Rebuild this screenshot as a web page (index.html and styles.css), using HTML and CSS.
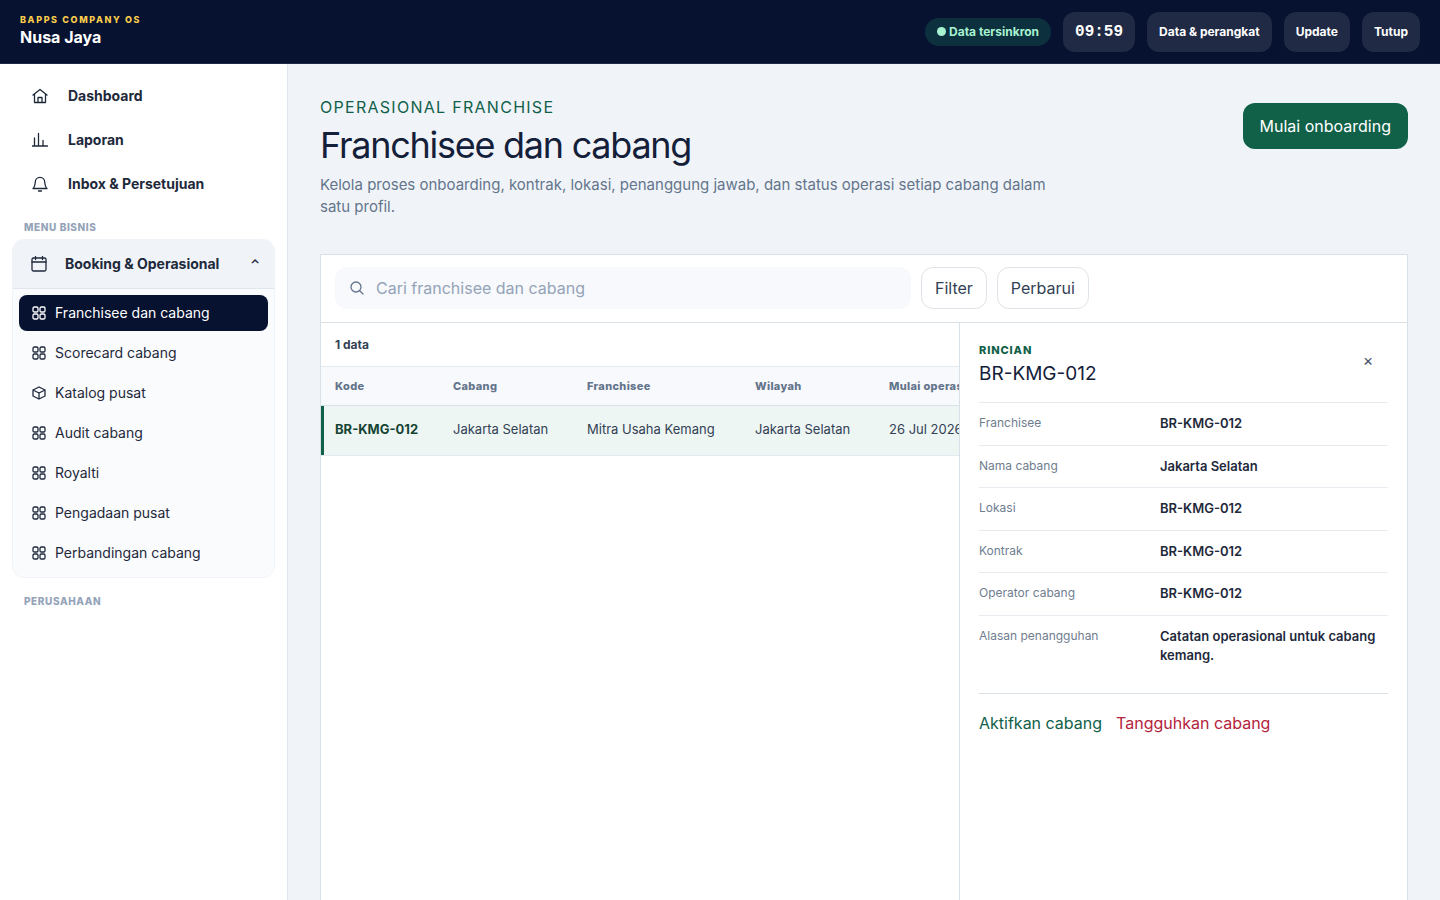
FILE: index.html
```
<!DOCTYPE html>
<html lang="id">
<head>
  <meta charset="utf-8">
  <meta name="viewport" content="width=device-width, initial-scale=1">
  <title>Franchisee dan cabang</title>
  <link rel="stylesheet" href="styles.css">
</head>
<body>
  <svg width="0" height="0" class="sprite" aria-hidden="true">
    <symbol id="icon-grid" viewBox="0 0 16 16">
      <rect x="2" y="2" width="5" height="5" rx="1.300"/>
      <rect x="9" y="2" width="5" height="5" rx="1.300"/>
      <rect x="2" y="9" width="5" height="5" rx="1.300"/>
      <rect x="9" y="9" width="5" height="5" rx="1.300"/>
    </symbol>
    <symbol id="icon-box" viewBox="0 0 16 16">
      <path d="M8 2l6 3v6l-6 3-6-3V5zM2 5l6 3 6-3M8 8v6"/>
    </symbol>
  </svg>

  <header class="topbar">
    <div class="brand">
      <span class="brand-eyebrow">BAPPS COMPANY OS</span>
      <strong class="brand-name">Nusa Jaya</strong>
    </div>
    <div class="topbar-actions">
      <span class="sync"><i class="sync-dot"></i>Data tersinkron</span>
      <time class="clock">09:59</time>
      <button type="button" class="top-btn">Data &amp; perangkat</button>
      <button type="button" class="top-btn">Update</button>
      <button type="button" class="top-btn">Tutup</button>
    </div>
  </header>

  <div class="layout">
    <nav class="sidebar">
      <a href="#" class="nav-link">
        <svg class="icon" viewBox="0 0 16 16"><path d="M1 7l7-5.500L15 7M2.500 6v8.500h11V6M6 14.500V9.500h4v5"/></svg>
        Dashboard
      </a>
      <a href="#" class="nav-link">
        <svg class="icon" viewBox="0 0 16 16"><path d="M.5 14h15M2.500 14V6M6.500 14V1.500M11 14V8.500"/></svg>
        Laporan
      </a>
      <a href="#" class="nav-link">
        <svg class="icon" viewBox="0 0 16 16"><path d="M1 12.500c1.800-1.500 2-3.200 2.300-6.500a4.700 4.700 0 0 1 9.400 0c.3 3.300 .5 5 2.300 6.500zM6.500 15h3"/></svg>
        Inbox &amp; Persetujuan
      </a>

      <p class="nav-label">MENU BISNIS</p>
      <div class="nav-group">
        <button type="button" class="nav-group-head" aria-expanded="true">
          <svg class="icon" viewBox="0 0 16 16"><rect x="1" y="2" width="14" height="13" rx="1.500"/><path d="M1 6h14M4.500 .5v3M11.500 .5v3"/></svg>
          <span>Booking &amp; Operasional</span>
          <span class="caret">⌃</span>
        </button>
        <div class="nav-sub">
          <a href="#" class="sub-link active"><svg class="icon"><use href="#icon-grid"/></svg>Franchisee dan cabang</a>
          <a href="#" class="sub-link"><svg class="icon"><use href="#icon-grid"/></svg>Scorecard cabang</a>
          <a href="#" class="sub-link"><svg class="icon"><use href="#icon-box"/></svg>Katalog pusat</a>
          <a href="#" class="sub-link"><svg class="icon"><use href="#icon-grid"/></svg>Audit cabang</a>
          <a href="#" class="sub-link"><svg class="icon"><use href="#icon-grid"/></svg>Royalti</a>
          <a href="#" class="sub-link"><svg class="icon"><use href="#icon-grid"/></svg>Pengadaan pusat</a>
          <a href="#" class="sub-link"><svg class="icon"><use href="#icon-grid"/></svg>Perbandingan cabang</a>
        </div>
      </div>
      <p class="nav-label">PERUSAHAAN</p>
    </nav>

    <main class="content">
      <div class="page-head">
        <div class="page-intro">
          <p class="eyebrow">OPERASIONAL FRANCHISE</p>
          <h1>Franchisee dan cabang</h1>
          <p class="lead">Kelola proses onboarding, kontrak, lokasi, penanggung jawab, dan status operasi setiap cabang dalam satu profil.</p>
        </div>
        <button type="button" class="primary">Mulai onboarding</button>
      </div>

      <section class="workspace">
        <div class="toolbar">
          <label class="search">
            <svg class="icon" viewBox="0 0 16 16"><circle cx="7" cy="7" r="5"/><path d="M10.700 10.700l3.300 3.300"/></svg>
            <input type="search" placeholder="Cari franchisee dan cabang" aria-label="Cari franchisee dan cabang">
          </label>
          <button type="button" class="tool-btn">Filter</button>
          <button type="button" class="tool-btn">Perbarui</button>
        </div>

        <div class="split">
          <div class="list">
            <p class="count">1 data</p>
            <table>
              <colgroup>
                <col class="col-code"><col class="col-branch"><col class="col-owner"><col class="col-area"><col class="col-date">
              </colgroup>
              <thead>
                <tr><th>Kode</th><th>Cabang</th><th>Franchisee</th><th>Wilayah</th><th>Mulai operasi</th></tr>
              </thead>
              <tbody>
                <tr class="selected">
                  <td><strong>BR-KMG-012</strong></td>
                  <td>Jakarta Selatan</td>
                  <td>Mitra Usaha Kemang</td>
                  <td>Jakarta Selatan</td>
                  <td>26 Jul 2026</td>
                </tr>
              </tbody>
            </table>
          </div>

          <aside class="detail">
            <div class="detail-head">
              <div>
                <p class="detail-label">RINCIAN</p>
                <h2>BR-KMG-012</h2>
              </div>
              <button type="button" class="close" aria-label="Tutup rincian">×</button>
            </div>
            <dl>
              <div><dt>Franchisee</dt><dd>BR-KMG-012</dd></div>
              <div><dt>Nama cabang</dt><dd>Jakarta Selatan</dd></div>
              <div><dt>Lokasi</dt><dd>BR-KMG-012</dd></div>
              <div><dt>Kontrak</dt><dd>BR-KMG-012</dd></div>
              <div><dt>Operator cabang</dt><dd>BR-KMG-012</dd></div>
              <div><dt>Alasan penangguhan</dt><dd>Catatan operasional untuk cabang kemang.</dd></div>
            </dl>
            <div class="detail-actions">
              <button type="button">Aktifkan cabang</button>
              <button type="button" class="danger">Tangguhkan cabang</button>
            </div>
          </aside>
        </div>
      </section>
    </main>
  </div>
</body>
</html>
```
FILE: styles.css
```
* {
  box-sizing: border-box;
}

body {
  display: flex;
  flex-direction: column;
  height: 100vh;
  margin: 0;
  overflow: hidden;
  background: #f0f4f9;
  color: #1e293b;
  font: 16px/1.5 Inter, sans-serif;
}

h1, h2, p, dl, dd {
  margin: 0;
}

button, input {
  font: inherit;
}

button {
  border: 0;
  cursor: pointer;
}

a {
  color: inherit;
  text-decoration: none;
}

.sprite {
  position: absolute;
}

.icon {
  flex: none;
  width: 16px;
  height: 16px;
  fill: none;
  stroke: currentColor;
  stroke-width: 1.3;
  stroke-linecap: round;
  stroke-linejoin: round;
}

/* top bar */

.topbar {
  display: flex;
  flex: none;
  align-items: center;
  justify-content: space-between;
  height: 64px;
  padding: 0 20px;
  border-bottom: 1px solid #1e2945;
  background: #06122f;
  color: #fff;
}

.brand {
  display: flex;
  flex-direction: column;
  padding-bottom: 4px;
}

.brand-eyebrow {
  color: #facc4d;
  font-size: 9px;
  font-weight: 800;
  line-height: 14px;
  letter-spacing: 0.18em;
}

.brand-name {
  font-size: 16px;
  line-height: 20px;
}

.topbar-actions {
  display: flex;
  align-items: center;
  gap: 12px;
  font-size: 12px;
  font-weight: 700;
}

.sync {
  display: flex;
  align-items: center;
  gap: 3px;
  height: 28px;
  padding: 0 12px;
  border-radius: 14px;
  background: #0d303f;
  color: #a7f3d0;
}

.sync-dot {
  width: 9px;
  height: 9px;
  border-radius: 50%;
  background: currentColor;
}

.clock,
.top-btn {
  height: 40px;
  padding: 0 12px;
  border-radius: 12px;
  background: #202a45;
  color: #fff;
}

.clock {
  font: 700 16px/40px "Liberation Mono", monospace;
}

/* sidebar */

.layout {
  display: flex;
  flex: 1;
  min-height: 0;
}

.sidebar {
  flex: none;
  width: 288px;
  padding: 12px;
  border-right: 1px solid #dfe6ee;
  background: #fff;
  line-height: 20px;
}

.nav-link {
  display: flex;
  align-items: center;
  gap: 20px;
  height: 40px;
  margin-bottom: 4px;
  padding: 0 20px;
  font-size: 14px;
  font-weight: 700;
}

.nav-label {
  padding: 12px 12px 4px;
  color: #94a3b8;
  font-size: 10px;
  font-weight: 800;
  line-height: 15px;
  letter-spacing: 0.06em;
}

.nav-group {
  margin-bottom: 4px;
  overflow: hidden;
  border: 1px solid #f0f4f8;
  border-radius: 12px;
  background: #fafbfd;
}

.nav-group-head {
  display: flex;
  align-items: center;
  gap: 18px;
  width: 100%;
  height: 49px;
  padding: 0 14px 0 18px;
  border-bottom: 1px solid #dfe6ee;
  background: #f0f4f9;
  color: inherit;
  font-size: 14px;
  font-weight: 700;
}

.caret {
  margin-left: auto;
  font-size: 12px;
}

.nav-sub {
  display: grid;
  gap: 4px;
  padding: 6px;
}

.sub-link {
  display: flex;
  align-items: center;
  gap: 8px;
  height: 36px;
  padding: 0 12px;
  border-radius: 8px;
  font-size: 14px;
}

.sub-link.active {
  background: #06122f;
  color: #fff;
}

/* page heading */

.content {
  display: flex;
  flex: 1;
  flex-direction: column;
  min-width: 0;
  padding: 32px 32px 0;
}

.page-head {
  display: flex;
  align-items: flex-start;
  justify-content: space-between;
  margin-bottom: 36px;
}

.page-intro {
  max-width: 740px;
}

.eyebrow {
  color: #116149;
  line-height: 22px;
  letter-spacing: 0.08em;
}

h1 {
  margin: 4px 0 6px;
  color: #14203a;
  font-size: 36px;
  font-weight: 400;
  line-height: 46px;
  letter-spacing: -0.035em;
}

.lead {
  color: #64748b;
  font-size: 15px;
  line-height: 22px;
}

.primary {
  height: 46px;
  margin-top: 7px;
  padding: 0 17px;
  border-radius: 12px;
  background: #116149;
  color: #fff;
}

/* workspace */

.workspace {
  display: flex;
  flex: 1;
  flex-direction: column;
  border: 1px solid #d9e1e8;
  border-bottom: 0;
  background: #fff;
}

.toolbar {
  display: flex;
  align-items: center;
  gap: 10px;
  padding: 12px 14px 13px;
  border-bottom: 1px solid #d9e1e8;
}

.search {
  display: flex;
  flex: 0 1 576px;
  align-items: center;
  gap: 11px;
  height: 42px;
  padding: 0 14px;
  border-radius: 12px;
  background: #f7f9fc;
  color: #64748b;
}

.search input {
  flex: 1;
  min-width: 0;
  padding: 0;
  border: 0;
  outline: 0;
  background: none;
}

.search input::placeholder {
  color: #94a3b8;
}

.tool-btn {
  height: 42px;
  padding: 0 13px;
  border: 1px solid #dfe4ea;
  border-radius: 12px;
  background: #fff;
  color: #334155;
}

.split {
  display: grid;
  flex: 1;
  grid-template-columns: minmax(0, 1fr) 448px;
}

.list {
  overflow: hidden;
}

.count {
  padding: 0 14px;
  border-bottom: 1px solid #e3e9ee;
  color: #334155;
  font-size: 12px;
  font-weight: 700;
  line-height: 43px;
}

table {
  width: 687px;
  border-collapse: collapse;
  table-layout: fixed;
  color: #334155;
  font-size: 13px;
  text-align: left;
  white-space: nowrap;
}

.col-code {
  width: 118px;
}

.col-branch,
.col-area,
.col-date {
  width: 134px;
}

.col-owner {
  width: 168px;
}

th, td {
  padding: 0 14px;
}

th {
  height: 38px;
  border-bottom: 1px solid #d9e1e8;
  background: #f7f9fc;
  color: #64748b;
  font-size: 11px;
  font-weight: 800;
  letter-spacing: 0.03em;
}

td {
  height: 50px;
  border-bottom: 1px solid #e3e9ee;
}

.selected {
  background: #edf6f3;
}

.selected td:first-child {
  box-shadow: inset 3px 0 #116149;
  color: #164434;
}

/* detail */

.detail {
  padding: 17px 19px;
  border-left: 1px solid #d9e1e8;
}

.detail-head {
  display: flex;
  align-items: center;
  justify-content: space-between;
  padding-bottom: 14px;
}

.detail-label {
  color: #116149;
  font-size: 11px;
  font-weight: 800;
  line-height: 18px;
  letter-spacing: 0.08em;
}

h2 {
  color: #14203a;
  font-size: 19px;
  font-weight: 400;
  line-height: 29px;
}

.close {
  width: 40px;
  height: 40px;
  margin-bottom: 8px;
  background: none;
  color: #475569;
}

dl {
  padding-bottom: 16px;
  border-bottom: 1px solid #d9e1e8;
}

dl > div {
  display: grid;
  grid-template-columns: 3fr 4fr;
  gap: 10px;
  padding: 11px 0;
  border-top: 1px solid #e8ecf0;
}

dt {
  color: #6f7d8f;
  font-size: 12px;
}

dd {
  color: #1e293b;
  font-size: 13px;
  font-weight: 600;
}

.detail-actions {
  display: flex;
  gap: 14px;
  padding-top: 17px;
}

.detail-actions button {
  padding: 0;
  background: none;
  color: #116149;
}

.detail-actions .danger {
  color: #b4233c;
}
```
